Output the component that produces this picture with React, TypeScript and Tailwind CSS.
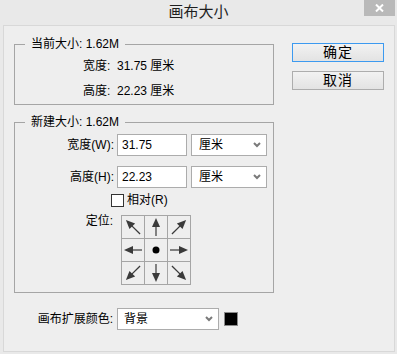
import React from 'react';

const font = { fontFamily: '"Liberation Sans", "Noto Sans CJK SC", sans-serif' };

function Arrow({ rot, diag }: { rot: number; diag?: boolean }) {
    return (
        <svg width="22" height="22" viewBox="0 0 22 22">
            <g transform={`rotate(${rot} 11 11)`}>
                {diag ? (
                    <>
                        <line x1="11" y1="9" x2="11" y2="21" stroke="#3a3a3a" strokeWidth="1.3" />
                        <polygon points="11,1 7,10 15,10" fill="#3a3a3a" />
                    </>
                ) : (
                    <>
                        <line x1="11" y1="9" x2="11" y2="20" stroke="#3a3a3a" strokeWidth="1.2" />
                        <polygon points="11,2 7,11 15,11" fill="#3a3a3a" />
                    </>
                )}
            </g>
        </svg>
    );
}

function Chevron() {
    return (
        <svg width="8" height="6" viewBox="0 0 8 6">
            <polyline points="1,1 4,4 7,1" fill="none" stroke="#7a7a7a" strokeWidth="2" />
        </svg>
    );
}

function FakeSelect({ value, w, pl }: { value: string; w: string; pl: string }) {
    return (
        <div className={`${w} h-[22px] bg-white border border-[#acacac] flex items-center justify-between ${pl} pr-[5px]`}>
            <span className="leading-[14px]">{value}</span>
            <Chevron />
        </div>
    );
}

export default function App() {
    // Sơ đồ định vị: 3x3 mũi tên
    const anchors = [
        { rot: -45, diag: true },
        { rot: 0 },
        { rot: 45, diag: true },
        { rot: -90 },
        null,
        { rot: 90 },
        { rot: -135, diag: true },
        { rot: 180 },
        { rot: 135, diag: true },
    ];

    return (
        <div className="w-[397px] h-[354px] bg-[#e9e9e9] text-[12px] text-black overflow-hidden" style={font}>
            {/* Title bar */}
            <div className="h-[25px] relative flex items-center justify-center">
                <span className="text-[15px] text-[#1e1e1e] leading-[18px] -mt-[1px]">画布大小</span>
                <div className="absolute right-[2px] top-0 w-[31px] h-[16px] bg-[#b9b9b9] flex items-center justify-center">
                    <svg width="9" height="8" viewBox="0 0 9 8">
                        <path d="M1 0.5 L8 7.5 M8 0.5 L1 7.5" stroke="#ffffff" strokeWidth="2" />
                    </svg>
                </div>
            </div>

            <div className="ml-[3px] w-[392px] h-[327px] border border-[#d8d8d8] bg-[#eeeeee] flex pt-[10px] pl-[10px]">
                <div className="w-[260px] flex flex-col">
                    <fieldset className="h-[69px] border border-[#a5a5a5]">
                        <legend className="ml-[10px] px-[6px] leading-[16px]">当前大小: 1.62M</legend>
                        <div className="flex flex-col pl-[68px] pt-[6px] gap-[9px] leading-[16px]">
                            <div>宽度:&nbsp;&nbsp;31.75 厘米</div>
                            <div>高度:&nbsp;&nbsp;22.23 厘米</div>
                        </div>
                    </fieldset>

                    <fieldset className="mt-[9px] h-[179px] border border-[#a5a5a5]">
                        <legend className="ml-[10px] px-[6px] leading-[16px]">新建大小: 1.62M</legend>
                        <div className="flex flex-col pt-[4px]">
                            <div className="flex items-center h-[22px]">
                                <div className="w-[102px] text-right pr-[3px]">宽度(W):</div>
                                <input readOnly value="31.75" className="w-[70px] h-[22px] bg-white border border-[#acacac] pl-[4px] outline-none" />
                                <div className="ml-[4px]">
                                    <FakeSelect value="厘米" w="w-[76px]" pl="pl-[7px]" />
                                </div>
                            </div>
                            <div className="flex items-center h-[22px] mt-[10px]">
                                <div className="w-[102px] text-right pr-[3px]">高度(H):</div>
                                <input readOnly value="22.23" className="w-[70px] h-[22px] bg-white border border-[#acacac] pl-[4px] outline-none" />
                                <div className="ml-[4px]">
                                    <FakeSelect value="厘米" w="w-[76px]" pl="pl-[7px]" />
                                </div>
                            </div>
                            <div className="flex items-center h-[13px] mt-[6px] ml-[96px]">
                                <div className="w-[13px] h-[13px] bg-white border border-[#333333]" />
                                <span className="ml-[3px] leading-[13px]">相对(R)</span>
                            </div>
                            <div className="flex items-start mt-[8px]">
                                <div className="w-[106px] text-right pr-[8px] leading-[12px]">定位:</div>
                                <div className="grid grid-cols-[22px_22px_22px] grid-rows-[22px_22px_22px] gap-px p-px bg-[#a5a5a5]">
                                    {anchors.map((a, i) => (
                                        <div key={i} className="bg-[#eeeeee] flex items-center justify-center">
                                            {a ? (
                                                <Arrow rot={a.rot} diag={a.diag} />
                                            ) : (
                                                <svg width="22" height="22" viewBox="0 0 22 22">
                                                    <circle cx="11" cy="11" r="3.5" fill="#000" />
                                                </svg>
                                            )}
                                        </div>
                                    ))}
                                </div>
                            </div>
                        </div>
                    </fieldset>

                    <div className="flex items-center mt-[15px]">
                        <div className="w-[100px] text-right pr-[1px]">画布扩展颜色:</div>
                        <div className="ml-[3px]">
                            <FakeSelect value="背景" w="w-[102px]" pl="pl-[6px]" />
                        </div>
                        <div className="ml-[5px] w-[14px] h-[14px] border border-[#8a8a8a] bg-black" />
                    </div>
                </div>

                <div className="ml-[18px] pt-[7px] flex flex-col">
                    <button className="w-[92px] h-[19px] border border-[#3c9af0] bg-gradient-to-b from-[#f2f2f2] to-[#e3e3e3] text-[14px] leading-[17px] tracking-[1px]">确定</button>
                    <button className="mt-[9px] w-[92px] h-[19px] border border-[#adadad] bg-gradient-to-b from-[#f2f2f2] to-[#e3e3e3] text-[14px] leading-[17px] tracking-[1px]">取消</button>
                </div>
            </div>
        </div>
    );
}
